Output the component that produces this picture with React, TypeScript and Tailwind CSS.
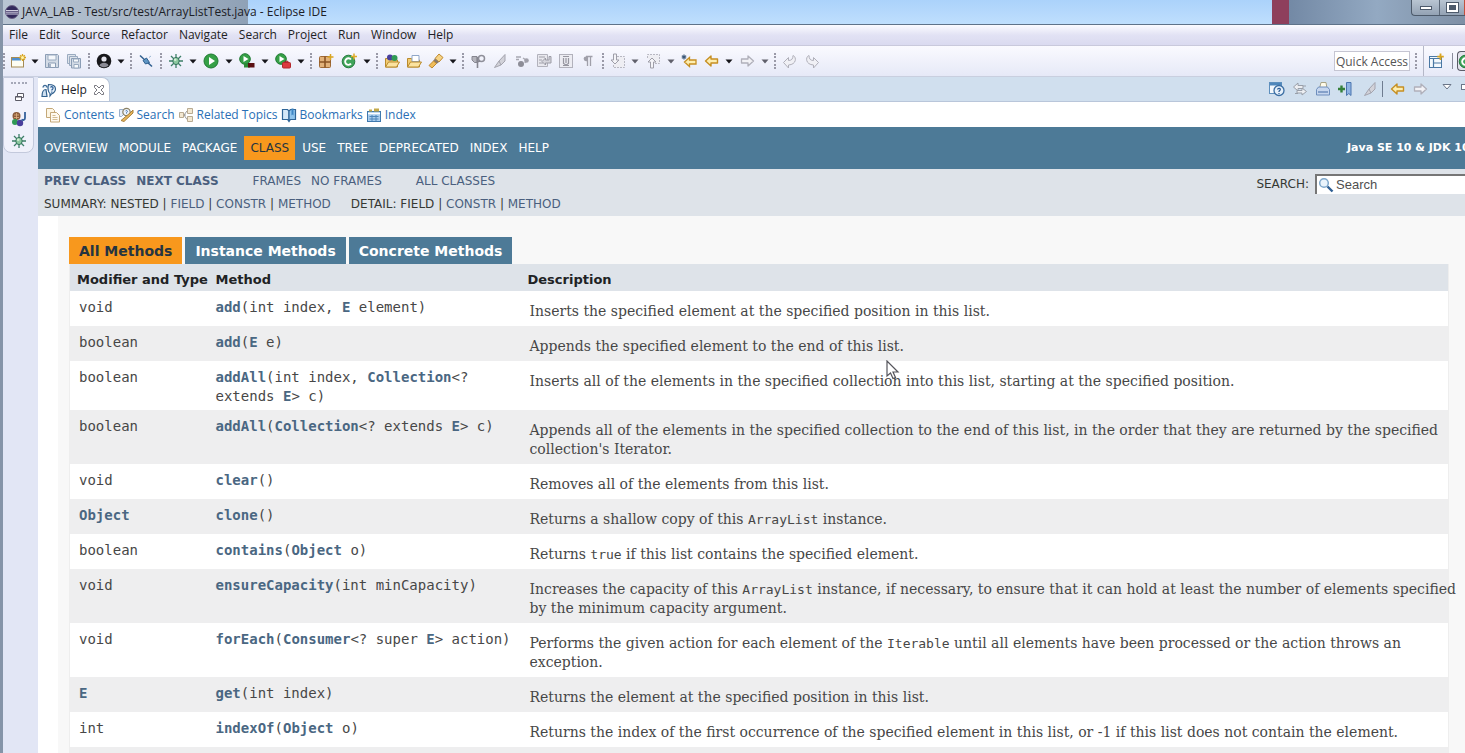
import React from 'react';

type IconName =
  | 'new' | 'save' | 'saveAll' | 'user' | 'pin' | 'bug' | 'run' | 'coverage' | 'external'
  | 'package' | 'class' | 'openType' | 'folder' | 'torch' | 'plug' | 'pen' | 'wrap' | 'block'
  | 'brackets' | 'pilcrow' | 'nextNote' | 'prevNote' | 'lastEdit' | 'back' | 'forward'
  | 'undo' | 'redo' | 'restore' | 'java' | 'help' | 'pages' | 'search' | 'topics' | 'book'
  | 'index' | 'helpToc' | 'sync' | 'print' | 'bookmark' | 'perspective' | 'magnifier';

const ARROW_LEFT = 'M1.5 8 7 3v3h6.5v4H7v3z';
const ARROW_RIGHT = 'M14.5 8 9 3v3H2.5v4H9v3z';

const icons: Record<IconName, React.ReactNode> = {
  new: (
    <>
      <rect x="1.5" y="4.5" width="12" height="9.5" fill="#fdfdf2" stroke="#a58b54" />
      <path d="M2 5h9v2.5H2z" fill="#4f8fd0" />
      <path d="M12.500 1v7M9 4.500h7M10.200 2.200l4.600 4.600M14.800 2.200l-4.600 4.600" stroke="#d9a520" strokeWidth="1.3" />
      <circle cx="12.5" cy="4.5" r="1.5" fill="#fff3a8" />
    </>
  ),
  save: (
    <>
      <path d="M1.500 1.500h12l1 1v12h-13z" fill="#d3dbe6" stroke="#8b9db5" />
      <path d="M4 2h8v5H4z" fill="#f4f7fb" stroke="#9aabc0" />
      <path d="M4.500 10h7v4.500h-7z" fill="#f4f7fb" stroke="#8b9db5" />
      <path d="M6 11v3" stroke="#8b9db5" strokeWidth="1.5" />
    </>
  ),
  saveAll: (
    <>
      <path d="M1.500 1.500h8v9h-8z" fill="#dde3eb" stroke="#9aabc0" />
      <path d="M3.500 3.500h8v9h-8z" fill="#dde3eb" stroke="#9aabc0" />
      <path d="M5.500 5.500h9v9.500h-9z" fill="#d3dbe6" stroke="#8b9db5" />
      <path d="M7.500 6h5v3h-5zM8 11.500h4.500V15H8z" fill="#f8fafc" stroke="#9aabc0" />
    </>
  ),
  user: (
    <>
      <circle cx="8" cy="8" r="7.3" fill="#18181b" />
      <circle cx="8" cy="6" r="2.6" fill="#e5e5ee" />
      <path d="M3.500 12.500c.7-3.600 8.300-3.600 9 0-2.400 2.400-6.600 2.400-9 0z" fill="#8a8a94" />
    </>
  ),
  pin: (
    <>
      <path d="M2 2.500 14 13.500" stroke="#2f5f8f" strokeWidth="1.5" />
      <path d="M5 7.500 8.500 5l3 4.500-4 1.500z" fill="#5f96c4" stroke="#2f5f8f" />
      <path d="M11 4.500 13 3" stroke="#9ab6d0" />
    </>
  ),
  bug: (
    <>
      <path d="M8 1v14M1 8h14M3 3l10 10M13 3 3 13" stroke="#3d7f68" strokeWidth="1.3" />
      <ellipse cx="8" cy="8" rx="3.2" ry="3.6" fill="#8cc8a0" stroke="#35755c" />
      <circle cx="7.2" cy="6.8" r="1.3" fill="#d3efd5" />
    </>
  ),
  run: (
    <>
      <circle cx="8" cy="8" r="7" fill="#35a046" stroke="#1f7a32" />
      <path d="M6 4v8l6-4z" fill="#fff" />
    </>
  ),
  coverage: (
    <>
      <circle cx="6" cy="6" r="5.3" fill="#35a046" stroke="#1f7a32" />
      <path d="M4.500 3v6l5-3z" fill="#fff" />
      <path d="M5 10.500h6v4H5z" fill="#2b8b36" />
      <path d="M9 10h6.500v4.500H9z" fill="#5a0f12" />
    </>
  ),
  external: (
    <>
      <circle cx="6" cy="6" r="5.3" fill="#35a046" stroke="#1f7a32" />
      <path d="M4.500 3v6l5-3z" fill="#fff" />
      <path d="M10 9.500V8.300h3v1.200" fill="none" stroke="#a31c22" />
      <rect x="7.5" y="9.5" width="8" height="5.5" rx="1" fill="#dc3a3f" stroke="#b3262c" />
    </>
  ),
  package: (
    <>
      <rect x="1.5" y="3.5" width="11" height="11" rx="1" fill="#e2b27a" stroke="#a06a34" />
      <path d="M7 3.500v11M1.500 9h11" stroke="#8a5424" strokeWidth="1.6" />
      <path d="M12.500 1v6M9.500 4h6" stroke="#d9a520" strokeWidth="1.5" />
    </>
  ),
  class: (
    <>
      <circle cx="7.5" cy="8.5" r="6.3" fill="#3fa45a" stroke="#23793c" />
      <path d="M10 6.500a3.300 3.300 0 1 0 0 4.200" fill="none" stroke="#fff" strokeWidth="1.9" />
      <path d="M13 .5v6M10 3.500h6" stroke="#e0ac28" strokeWidth="1.5" />
    </>
  ),
  openType: (
    <>
      <path d="M1.500 14V5.500h4l1 1.500h7V14z" fill="#f2cc72" stroke="#b98a2c" />
      <circle cx="6" cy="4.5" r="3" fill="#4a3f9c" />
      <circle cx="10.5" cy="5" r="3" fill="#2f9a55" />
      <path d="M1.500 14 4.500 9h11l-3 5z" fill="#fbe3a0" stroke="#b98a2c" />
    </>
  ),
  folder: (
    <>
      <path d="M1.500 14V5.500h4l1 1.500h7V14z" fill="#f2cc72" stroke="#b98a2c" />
      <path d="M6 2.500h7v6H6z" fill="#fff" stroke="#8fa6c8" />
      <path d="M1.500 14 4.500 9h11l-3 5z" fill="#fbe3a0" stroke="#b98a2c" />
    </>
  ),
  torch: (
    <>
      <path d="m11 1 4 3.500-4 4.500L7 5.500z" fill="#f6d385" stroke="#c08a2e" />
      <path d="M7 5.500 11 9l-2.500 2L5 8z" fill="#8a7a68" />
      <path d="M5.500 8 8.500 10.500 4 15l-3-2.500z" fill="#f0bd5a" stroke="#c08a2e" />
    </>
  ),
  plug: (
    <>
      <path d="M2 3.500h5v6H4.500L2 7z" fill="#b4b4bc" stroke="#85858f" />
      <circle cx="11.5" cy="5.5" r="3" fill="none" stroke="#8f8f99" strokeWidth="1.5" />
      <path d="M7.500 4v11M7 9l3-1" stroke="#85858f" strokeWidth="1.6" />
    </>
  ),
  pen: <path d="M13 1.500 7 8l-4.500 6.500L9 12l4-4zM7 8l2 4" fill="#d2d2d9" stroke="#a4a4ae" />,
  wrap: (
    <>
      <path d="M2 4h5M2 6.500h3M9 5l3 2-1 3" fill="none" stroke="#a8a8b1" strokeWidth="1.3" />
      <circle cx="7" cy="11" r="3" fill="#8d8d97" />
      <circle cx="12.500" cy="7.500" r="2.300" fill="#a0a0aa" />
    </>
  ),
  block: (
    <>
      <path d="M1.500 1.500h10v12h-10z" fill="#e8e8ee" stroke="#b2b2bc" />
      <path d="M3 4h6M3 7h3M3 10h4" stroke="#a0a0aa" />
      <path d="M6 8.500 9.500 5v2H13V3.500h2V10H9.500v2z" fill="#d5d5dc" stroke="#9c9ca6" />
    </>
  ),
  brackets: (
    <>
      <rect x="1.5" y="1.5" width="13" height="13" fill="#ececf2" stroke="#b2b2bc" />
      <path d="M5 3.500h6M5 12.500h6M5.500 5v5.500l2.500 1.500 2.500-1.500V5M8 5v5" fill="none" stroke="#9696a0" strokeWidth="1.2" />
    </>
  ),
  pilcrow: (
    <>
      <path d="M8 3.500H6a2.300 2.300 0 0 0 0 4.700h2z" fill="#a0a0aa" />
      <path d="M7.500 3.500V13M10.500 3.500V13M6 3.500h6.500" stroke="#a0a0aa" strokeWidth="1.3" />
    </>
  ),
  nextNote: (
    <>
      <path d="M7 3.500h7.500v11h-11V11" fill="#eeeef3" stroke="#b8b8c2" strokeDasharray="2 1" />
      <path d="M3.500 1v6H1l4 4 4-4H6.500V1z" fill="#f4f4f8" stroke="#9e9ea8" />
    </>
  ),
  prevNote: (
    <>
      <path d="M2.500 5V1.500h12v9H9" fill="#eeeef3" stroke="#b8b8c2" strokeDasharray="2 1" />
      <path d="M5.500 15V9H3l4-4 4 4H8.500v6z" fill="#f4f4f8" stroke="#9e9ea8" />
    </>
  ),
  lastEdit: (
    <>
      <path d="M3.500 9 8.500 4.500V7H15v4H8.500v2.500z" fill="#fdeeb0" stroke="#c68f22" strokeWidth="1.3" />
      <path d="M3 1.500v5M.8 2.700l4.400 2.600M5.200 2.700.8 5.300" stroke="#3c5878" strokeWidth="1.2" />
    </>
  ),
  back: <path d={ARROW_LEFT} fill="#fdeeb0" stroke="#c68f22" strokeWidth="1.4" strokeLinejoin="round" />,
  forward: <path d={ARROW_RIGHT} fill="#f2f2f6" stroke="#b0b0ba" strokeWidth="1.3" strokeLinejoin="round" />,
  undo: <path d="M1.500 9.500 6.500 4.500V7.500c3 0 4.500-1.500 4.500-5 3.500 1 4 9-4.500 9.500v3z" fill="#f0f0f5" stroke="#b0b0ba" />,
  redo: <path d="M14.500 9.500 9.500 4.500V7.500c-3 0-4.500-1.500-4.500-5-3.500 1-4 9 4.500 9.500v3z" fill="#f0f0f5" stroke="#b0b0ba" />,
  restore: (
    <>
      <path d="M6.500 4.500h6v4h-6z" fill="#fff" stroke="#5b5b66" />
      <path d="M4.500 7.500h6v4h-6z" fill="#fff" stroke="#5b5b66" />
      <path d="M4.500 8h6" stroke="#5b5b66" />
    </>
  ),
  java: (
    <>
      <circle cx="5.5" cy="5" r="4" fill="#8a5a3a" />
      <path d="M3 4h5M3 6.500h5M5.500 2v6" stroke="#e0b080" strokeWidth=".8" />
      <circle cx="4" cy="11" r="3" fill="#2f9a55" />
      <circle cx="9" cy="12" r="3.2" fill="#4a3f9c" />
      <path d="M14 1v6c0 2-2 2.500-3.500 1.500" fill="none" stroke="#35619b" strokeWidth="1.8" />
    </>
  ),
  help: (
    <>
      <path d="M2 5.500c0-3 4-3 4 0M1 14.500C1 8 3 7.500 5 7.500l1 7z" fill="#cfe0f0" stroke="#33628f" strokeWidth="1.2" />
      <path d="M7.500 2.500c3 0 7 .5 7 4.500 0 3-2 4-4 5l-1.500 2v-2.500c-2-1-2.500-6-1.500-9z" fill="#e8f2fb" stroke="#33628f" strokeWidth="1.2" />
      <path d="M9.500 5.500c1-1.500 3-.5 2.500 1-.3.800-1.200 1-1.200 2M10.800 9.500v1.200" fill="none" stroke="#2b5c96" strokeWidth="1.2" />
    </>
  ),
  pages: (
    <>
      <path d="M1.500 1.500h6l2 2v7h-8z" fill="#fdf6e4" stroke="#c4a878" />
      <path d="M5.500 5.500h6l3 3V15h-9z" fill="#fffaf0" stroke="#c4a878" />
      <path d="M7.500 8.500h3M7.500 10.500h5M7.500 12.500h5" stroke="#d3bd94" />
    </>
  ),
  search: (
    <>
      <path d="M1.500 2.500h5v4l-3 3h-2z" fill="#e6eef8" stroke="#9ab0cc" />
      <circle cx="8.5" cy="5" r="3.7" fill="#eef4fb" stroke="#8a8064" strokeWidth="1.2" />
      <path d="M7.500 4.200c.6-1.200 2.200-.6 1.800.5l-.8 1v.8" fill="none" stroke="#3f6da8" />
      <path d="m12 6 3-3v3L6 14.500l-3-1z" fill="#e8b65a" stroke="#a8803c" />
    </>
  ),
  topics: (
    <>
      <path d="M5 8h3M9 4 6 8l3 4.500" fill="none" stroke="#9a9a9a" />
      <path d="M1.500 5.500h4v5h-4z" fill="#f3e8d2" stroke="#b9ab92" />
      <path d="M9.500 1.500h5v5h-5zM9.500 9.500h5v5h-5z" fill="#f3e8d2" stroke="#b9ab92" />
    </>
  ),
  book: (
    <>
      <path d="M1.500 2.500h5L8 4v10l-1.500-1.500h-5z" fill="#d4e8f8" stroke="#2f6597" strokeWidth="1.2" />
      <path d="M8 4l1.500-1.500h5v10h-5L8 14z" fill="#8fc4ec" stroke="#2f6597" strokeWidth="1.2" />
      <path d="M10.500 1.500h2v7l-1-1-1 1z" fill="#3f86c4" />
    </>
  ),
  index: (
    <>
      <rect x="1.5" y="4.5" width="13" height="10" fill="#a9cdee" stroke="#3f78ad" />
      <path d="M2 6.500h12" stroke="#fff" strokeWidth="1.5" />
      <path d="M3.500 9.500h9M3.500 12h9M6 8v6M10 8v6" stroke="#4f87bb" />
      <path d="M3 2.500h3v2H3zM8 1.500h5v3H8z" fill="#c4a94a" />
    </>
  ),
  helpToc: (
    <>
      <rect x=".5" y="1.5" width="12" height="11" fill="#f4f8fc" stroke="#5d8fbd" />
      <path d="M1 2h11.500v2.500H1z" fill="#4f87bb" />
      <circle cx="10" cy="9.5" r="5" fill="#e6f0fa" stroke="#3b6ea3" strokeWidth="1.3" />
      <path d="M8.500 8.500c.5-2 3.500-1.200 2.700.5L10 10.300v.7M10 12v1" fill="none" stroke="#2b5c96" strokeWidth="1.2" />
    </>
  ),
  sync: (
    <>
      <path d="M1.500 6 6 2v2.500h5v3H6V10zM14.500 10.500 10 14v-2H5V9.500h5V7z" fill="#eceef2" stroke="#999fa9" />
      <path d="M3 12.500h3M11 5h3" stroke="#999fa9" />
    </>
  ),
  print: (
    <>
      <path d="M4.500 7.500 6 1.500h5l1 6z" fill="#fffbe9" stroke="#a9a487" />
      <path d="M1.500 8.500 3.500 6h9l2 2.500v5.500h-13z" fill="#c6d6ee" stroke="#6e8ebd" />
      <path d="M3 11h10" stroke="#6e8ebd" strokeWidth="1.5" />
    </>
  ),
  bookmark: (
    <>
      <path d="M9.500 1.500h4.500v13l-2.200-2-2.300 2z" fill="#8fb3e2" stroke="#4a74ae" />
      <path d="M4.500 4.500v7M1 8h7" stroke="#35803a" strokeWidth="2.4" />
    </>
  ),
  perspective: (
    <>
      <rect x="1.5" y="3.5" width="12" height="11" fill="#f4f9fd" stroke="#4a78a4" />
      <path d="M2 5.500h11M5.500 5v9M5.500 10h8" stroke="#4a78a4" strokeWidth="1.2" />
      <path d="M12.500 .5v6.500M9.300 3.700h6.500" stroke="#d9a520" strokeWidth="1.8" />
    </>
  ),
  magnifier: (
    <>
      <circle cx="6" cy="6" r="4.3" fill="#eaf4fc" stroke="#7fa8cc" strokeWidth="1.5" />
      <path d="m9.500 9.500 5 5" stroke="#2f5f93" strokeWidth="2.4" />
    </>
  ),
};

const Icon = ({ name }: { name: IconName }) => (
  <svg className="h-4 w-4 shrink-0" viewBox="0 0 16 16" fill="none" aria-hidden="true">
    {icons[name]}
  </svg>
);

const IconButton = ({ name, wide = false }: { name: IconName; wide?: boolean }) => (
  <button type="button" aria-label={name} className={`flex h-[22px] shrink-0 items-center justify-center ${wide ? 'w-6' : 'w-[22px]'}`}>
    <Icon name={name} />
  </button>
);

const Caret = ({ muted = false }: { muted?: boolean }) => (
  <button type="button" aria-label="More" className="flex h-[22px] w-3 shrink-0 items-center justify-center">
    <svg width="8" height="5" viewBox="0 0 8 5" aria-hidden="true">
      <path d="M.5.500h7L4 4.500z" fill={muted ? '#60606b' : '#15151a'} />
    </svg>
  </button>
);

const Grip = () => (
  <div className="flex w-2 shrink-0 justify-center">
    <div className="h-4 border-l-2 border-dotted border-[#9a9aa8]" />
  </div>
);

const Toolbar = () => (
  <div className="flex h-[31px] items-center overflow-hidden border-b border-[#c9cfdf] bg-linear-to-b from-[#fafaff] to-[#e6e9f7]">
    <div className="h-4 w-1 shrink-0 border-l-2 border-dotted border-[#9a9aa8]" />
    <IconButton name="new" />
    <Caret />
    <IconButton name="save" />
    <IconButton name="saveAll" />
    <Grip />
    <IconButton name="user" />
    <Caret />
    <Grip />
    <IconButton name="pin" />
    <Grip />
    <IconButton name="bug" />
    <Caret />
    <IconButton name="run" wide />
    <Caret />
    <IconButton name="coverage" wide />
    <Caret />
    <IconButton name="external" wide />
    <Caret />
    <Grip />
    <IconButton name="package" />
    <IconButton name="class" wide />
    <Caret />
    <Grip />
    <IconButton name="openType" />
    <IconButton name="folder" />
    <IconButton name="torch" />
    <Caret />
    <Grip />
    <IconButton name="plug" />
    <IconButton name="pen" />
    <IconButton name="wrap" />
    <IconButton name="block" />
    <IconButton name="brackets" />
    <IconButton name="pilcrow" />
    <Grip />
    <IconButton name="nextNote" />
    <Caret muted />
    <IconButton name="prevNote" wide />
    <Caret muted />
    <IconButton name="lastEdit" wide />
    <IconButton name="back" />
    <Caret />
    <IconButton name="forward" wide />
    <Caret muted />
    <Grip />
    <IconButton name="undo" />
    <IconButton name="redo" />
    <div className="ml-auto flex shrink-0 items-center">
      <input
        type="text"
        aria-label="Quick Access"
        placeholder="Quick Access"
        className="mr-0.5 h-5 w-[76px] border border-[#c5c5d2] bg-white text-center text-xs text-[#555] placeholder:text-[#555]"
      />
      <Grip />
      <div className="h-8 w-1 border-r border-[#b5b8c8]" />
      <IconButton name="perspective" wide />
      <div className="mx-1 h-4 w-px bg-[#8a8d9c]" />
      <button type="button" aria-label="Java" className="flex h-5 w-2 items-center overflow-hidden rounded-l border border-r-0 border-[#5c5c68] bg-[#e3e3ec]">
        <Icon name="class" />
      </button>
    </div>
  </div>
);

const TitleBar = () => (
  <div className="flex h-6 items-stretch overflow-hidden bg-linear-to-b from-[#abd2fb] to-[#bfdffd]">
    <div className="flex w-[245px] shrink-0 items-center gap-0.5 bg-linear-to-r from-[#b9c5d3] via-[#a9b7c7] to-[#8fa1b6] pl-px">
      <svg className="h-4 w-4 shrink-0" viewBox="0 0 16 16" aria-hidden="true">
        <circle cx="8" cy="8" r="6.5" fill="#32295c" stroke="#6b6386" />
        <path d="M2 6.500h12M1.800 8.200h12.400M2.200 10h11.600" stroke="#e4e2f0" strokeWidth=".9" />
      </svg>
      <h1 className="whitespace-nowrap text-xs text-[#1c2026]">JAVA_LAB - Test/src/test/ArrayListTest.java - Eclipse IDE</h1>
    </div>
    <div className="ml-auto flex w-[193px] shrink-0">
      <div className="w-[17px] bg-[#8e3f5c]" />
      <div className="flex flex-1 items-start justify-end bg-linear-to-r from-[#7389a5] via-[#93a9c2] to-[#7f90a5]">
        <div className="flex h-4 overflow-hidden rounded-bl border border-t-0 border-r-0 border-[#4d5a6b] bg-linear-to-b from-[#b9c5d2] to-[#93a2b4]">
          <button type="button" aria-label="Minimize" className="flex w-7 items-center justify-center border-r border-[#5b6878]">
            <span className="h-1 w-3 border border-[#4d5a6b] bg-white" />
          </button>
          <button type="button" aria-label="Maximize" className="flex w-6 items-center justify-center">
            <span className="h-[9px] w-[11px] border-2 border-white bg-[#4d5a6b] outline outline-[#4d5a6b]" />
          </button>
          <div className="w-px bg-[#c4503c]" />
        </div>
      </div>
    </div>
  </div>
);

const menus = ['File', 'Edit', 'Source', 'Refactor', 'Navigate', 'Search', 'Project', 'Run', 'Window', 'Help'];

const MenuBar = () => (
  <nav className="flex h-[21px] items-center gap-[11px] border-b border-[#c9c9dc] bg-linear-to-b from-[#fbfbff] via-[#e2e2f4] to-[#dadaf0] pl-1.5">
    {menus.map((menu) => (
      <button key={menu} type="button" className="text-xs text-[#1e1e24]">{menu}</button>
    ))}
  </nav>
);

const SideBar = () => (
  <aside className="w-[35px] shrink-0 bg-[#e2e6f5]">
    <div className="mr-1 flex h-[76px] flex-col items-center rounded-b-lg border border-[#c3c9dc] bg-[#f0f1fb] pt-1">
      <div className="w-4 border-t-2 border-dotted border-[#a5a8b8]" />
      <div className="mt-0.5 flex flex-col">
        <IconButton name="restore" />
        <IconButton name="java" />
        <IconButton name="bug" />
      </div>
    </div>
  </aside>
);

const HelpTabs = () => (
  <div className="flex h-[25px] items-stretch border-b border-[#b9c6da] bg-[#d0dfee]">
    <div className="flex items-center gap-1 rounded-tr-lg border-t border-r border-[#b9c6da] bg-white pr-1 pl-[3px]">
      <Icon name="help" />
      <span className="text-xs text-[#22222a]">Help</span>
      <button type="button" aria-label="Close Help" className="ml-0.5">
        <svg width="12" height="12" viewBox="0 0 12 12" fill="none" aria-hidden="true">
          <path d="M1.500 1.500h2L6 4l2.500-2.500h2v2L8 6l2.500 2.500v2h-2L6 8l-2.500 2.500h-2v-2L4 6 1.500 3.500z" fill="#fff" stroke="#77777f" />
        </svg>
      </button>
    </div>
    <div className="ml-auto flex shrink-0 items-center overflow-hidden">
      <IconButton name="helpToc" />
      <IconButton name="sync" wide />
      <IconButton name="print" />
      <IconButton name="bookmark" />
      <div className="w-0.5" />
      <IconButton name="pen" wide />
      <div className="mr-1 h-4 w-px bg-[#6f7c90]" />
      <IconButton name="back" />
      <IconButton name="forward" />
      <button type="button" aria-label="View menu" className="ml-2 flex w-4 justify-center self-center pb-1">
        <svg width="10" height="6" viewBox="0 0 10 6" fill="none" aria-hidden="true">
          <path d="M1 .5h8L5 5z" fill="#fff" stroke="#6b7688" />
        </svg>
      </button>
      <button type="button" aria-label="Minimize view" className="mb-1 ml-1.5 h-1.5 w-1 border border-r-0 border-[#6b7688] bg-white" />
    </div>
  </div>
);

const helpLinks: { icon: IconName; label: string }[] = [
  { icon: 'pages', label: 'Contents' },
  { icon: 'search', label: 'Search' },
  { icon: 'topics', label: 'Related Topics' },
  { icon: 'book', label: 'Bookmarks' },
  { icon: 'index', label: 'Index' },
];

const HelpLinks = () => (
  <nav className="flex h-[25px] items-center gap-[3px] pl-[7px]">
    {helpLinks.map(({ icon, label }) => (
      <a key={label} href="#" className="flex items-center gap-[3px] text-xs text-[#2a6fb5]">
        <Icon name={icon} />
        {label}
      </a>
    ))}
  </nav>
);

const topNav = ['OVERVIEW', 'MODULE', 'PACKAGE', 'CLASS', 'USE', 'TREE', 'DEPRECATED', 'INDEX', 'HELP'];

const DocNav = () => (
  <header className="font-['DejaVu_Sans',sans-serif] text-xs">
    <div className="flex h-[42px] items-center overflow-hidden bg-[#4d7a97] pl-1.5 text-white">
      <nav className="flex items-center gap-[11px]">
        {topNav.map((item) =>
          item === 'CLASS' ? (
            <span key={item} className="-mx-1 bg-[#f8981d] px-1.5 py-1 text-[#253441]">{item}</span>
          ) : (
            <a key={item} href="#">{item}</a>
          ),
        )}
      </nav>
      <div className="ml-auto w-[118px] shrink-0 text-[11px] font-bold whitespace-nowrap">Java SE 10 &amp; JDK 10</div>
    </div>
    <div className="flex h-[47px] justify-between overflow-hidden bg-[#dee3e9] pl-1.5 text-[#4a5f7e]">
      <div className="flex flex-col gap-[7px] pt-1">
        <div className="flex">
          <a href="#" className="mr-2.5 font-bold">PREV CLASS</a>
          <a href="#" className="mr-[34px] font-bold">NEXT CLASS</a>
          <a href="#" className="mr-2.5">FRAMES</a>
          <a href="#" className="mr-[34px]">NO FRAMES</a>
          <a href="#">ALL CLASSES</a>
        </div>
        <div className="flex gap-5 text-[#353833]">
          <div>
            SUMMARY: NESTED | <a href="#" className="text-[#4a5f7e]">FIELD</a> | <a href="#" className="text-[#4a5f7e]">CONSTR</a> | <a href="#" className="text-[#4a5f7e]">METHOD</a>
          </div>
          <div>
            DETAIL: FIELD | <a href="#" className="text-[#4a5f7e]">CONSTR</a> | <a href="#" className="text-[#4a5f7e]">METHOD</a>
          </div>
        </div>
      </div>
      <div className="flex items-start gap-1.5 pt-[5px]">
        <label htmlFor="doc-search" className="pt-0.5 text-[#353833]">SEARCH:</label>
        <div className="flex h-5 w-[150px] items-center gap-0.5 border-t-2 border-l-2 border-[#767676] bg-white pl-px">
          <Icon name="magnifier" />
          <input id="doc-search" type="text" placeholder="Search" className="w-full min-w-0 font-['Liberation_Sans',sans-serif] text-[13px] outline-none placeholder:text-[#4f4f4f]" />
        </div>
      </div>
    </div>
  </header>
);

const L = ({ children }: { children: React.ReactNode }) => (
  <a href="#" className="font-bold text-[#4a6782]">{children}</a>
);

const C = ({ children }: { children: React.ReactNode }) => (
  <code className="font-['DejaVu_Sans_Mono',monospace] text-[13px]">{children}</code>
);

const methods: { type: React.ReactNode; method: React.ReactNode; description: React.ReactNode }[] = [
  {
    type: 'void',
    method: <><L>add</L>(int index, <L>E</L> element)</>,
    description: 'Inserts the specified element at the specified position in this list.',
  },
  {
    type: 'boolean',
    method: <><L>add</L>(<L>E</L> e)</>,
    description: 'Appends the specified element to the end of this list.',
  },
  {
    type: 'boolean',
    method: <><L>addAll</L>(int index, <L>Collection</L>&lt;?<br />extends <L>E</L>&gt; c)</>,
    description: 'Inserts all of the elements in the specified collection into this list, starting at the specified position.',
  },
  {
    type: 'boolean',
    method: <><L>addAll</L>(<L>Collection</L>&lt;? extends <L>E</L>&gt; c)</>,
    description: <>Appends all of the elements in the specified collection to the end of this list, in the order that they are returned by the specified<br />collection's Iterator.</>,
  },
  {
    type: 'void',
    method: <><L>clear</L>()</>,
    description: 'Removes all of the elements from this list.',
  },
  {
    type: <L>Object</L>,
    method: <><L>clone</L>()</>,
    description: <>Returns a shallow copy of this <C>ArrayList</C> instance.</>,
  },
  {
    type: 'boolean',
    method: <><L>contains</L>(<L>Object</L> o)</>,
    description: <>Returns <C>true</C> if this list contains the specified element.</>,
  },
  {
    type: 'void',
    method: <><L>ensureCapacity</L>(int minCapacity)</>,
    description: <>Increases the capacity of this <C>ArrayList</C> instance, if necessary, to ensure that it can hold at least the number of elements specified<br />by the minimum capacity argument.</>,
  },
  {
    type: 'void',
    method: <><L>forEach</L>(<L>Consumer</L>&lt;? super <L>E</L>&gt; action)</>,
    description: <>Performs the given action for each element of the <C>Iterable</C> until all elements have been processed or the action throws an<br />exception.</>,
  },
  {
    type: <L>E</L>,
    method: <><L>get</L>(int index)</>,
    description: 'Returns the element at the specified position in this list.',
  },
  {
    type: 'int',
    method: <><L>indexOf</L>(<L>Object</L> o)</>,
    description: 'Returns the index of the first occurrence of the specified element in this list, or -1 if this list does not contain the element.',
  },
];

const tabs = ['All Methods', 'Instance Methods', 'Concrete Methods'];

const MethodSummary = () => (
  <main className="ml-5 bg-[#f8f8f8] pt-[21px] pr-4 pl-[11px]">
    <div className="flex gap-[3px] font-['DejaVu_Sans',sans-serif] text-sm">
      {tabs.map((tab, i) => (
        <button key={tab} type="button" className={`h-[27px] px-2.5 font-bold ${i === 0 ? 'bg-[#f8981d] text-[#253441]' : 'bg-[#4d7a97] text-white'}`}>
          {tab}
        </button>
      ))}
    </div>
    <table className="w-full table-fixed border-x border-[#eee] bg-white text-left text-sm leading-[19px] text-[#474747]">
      <thead className="bg-[#dee3e9] font-['DejaVu_Sans',sans-serif] text-[13px] text-[#202224]">
        <tr className="h-[27px] whitespace-nowrap">
          <th className="w-[138px] pt-1 pl-[7px]">Modifier and Type</th>
          <th className="w-[312px] pt-1 pl-2">Method</th>
          <th className="pt-1 pl-2">Description</th>
        </tr>
      </thead>
      <tbody className="align-top whitespace-nowrap">
        {methods.map((m, i) => (
          <tr key={i} className="even:bg-[#eeeeef]">
            <td className="pt-[7px] pl-[9px] font-['DejaVu_Sans_Mono',monospace]">{m.type}</td>
            <td className="pt-[7px] pb-1 pl-2 font-['DejaVu_Sans_Mono',monospace]">{m.method}</td>
            <td className="pt-[11px] pb-[5px] pl-2.5 font-['DejaVu_Serif',serif]">{m.description}</td>
          </tr>
        ))}
        <tr className="h-9 even:bg-[#eeeeef]">
          <td colSpan={3} />
        </tr>
      </tbody>
    </table>
  </main>
);

const Cursor = () => (
  <svg className="absolute top-[360px] left-[883px] h-5 w-3.5" viewBox="0 0 14 20" aria-hidden="true">
    <path d="M1 1v15l3.500-3 2.500 5.500 2.500-1L7 12h5z" fill="#fff" stroke="#55555c" strokeWidth="1.2" />
  </svg>
);

const App: React.FC = () => {
  return (
    <div className="relative h-screen overflow-hidden border-l-[3px] border-[#8594a8] bg-white font-['Open_Sans','Noto_Sans',sans-serif]">
      <TitleBar />
      <div className="border-t border-[#5f7389]">
        <MenuBar />
        <Toolbar />
        <div className="flex h-screen">
          <SideBar />
          <div className="min-w-0 flex-1">
            <HelpTabs />
            <HelpLinks />
            <DocNav />
            <MethodSummary />
          </div>
        </div>
      </div>
      <Cursor />
    </div>
  );
};

export default App;
